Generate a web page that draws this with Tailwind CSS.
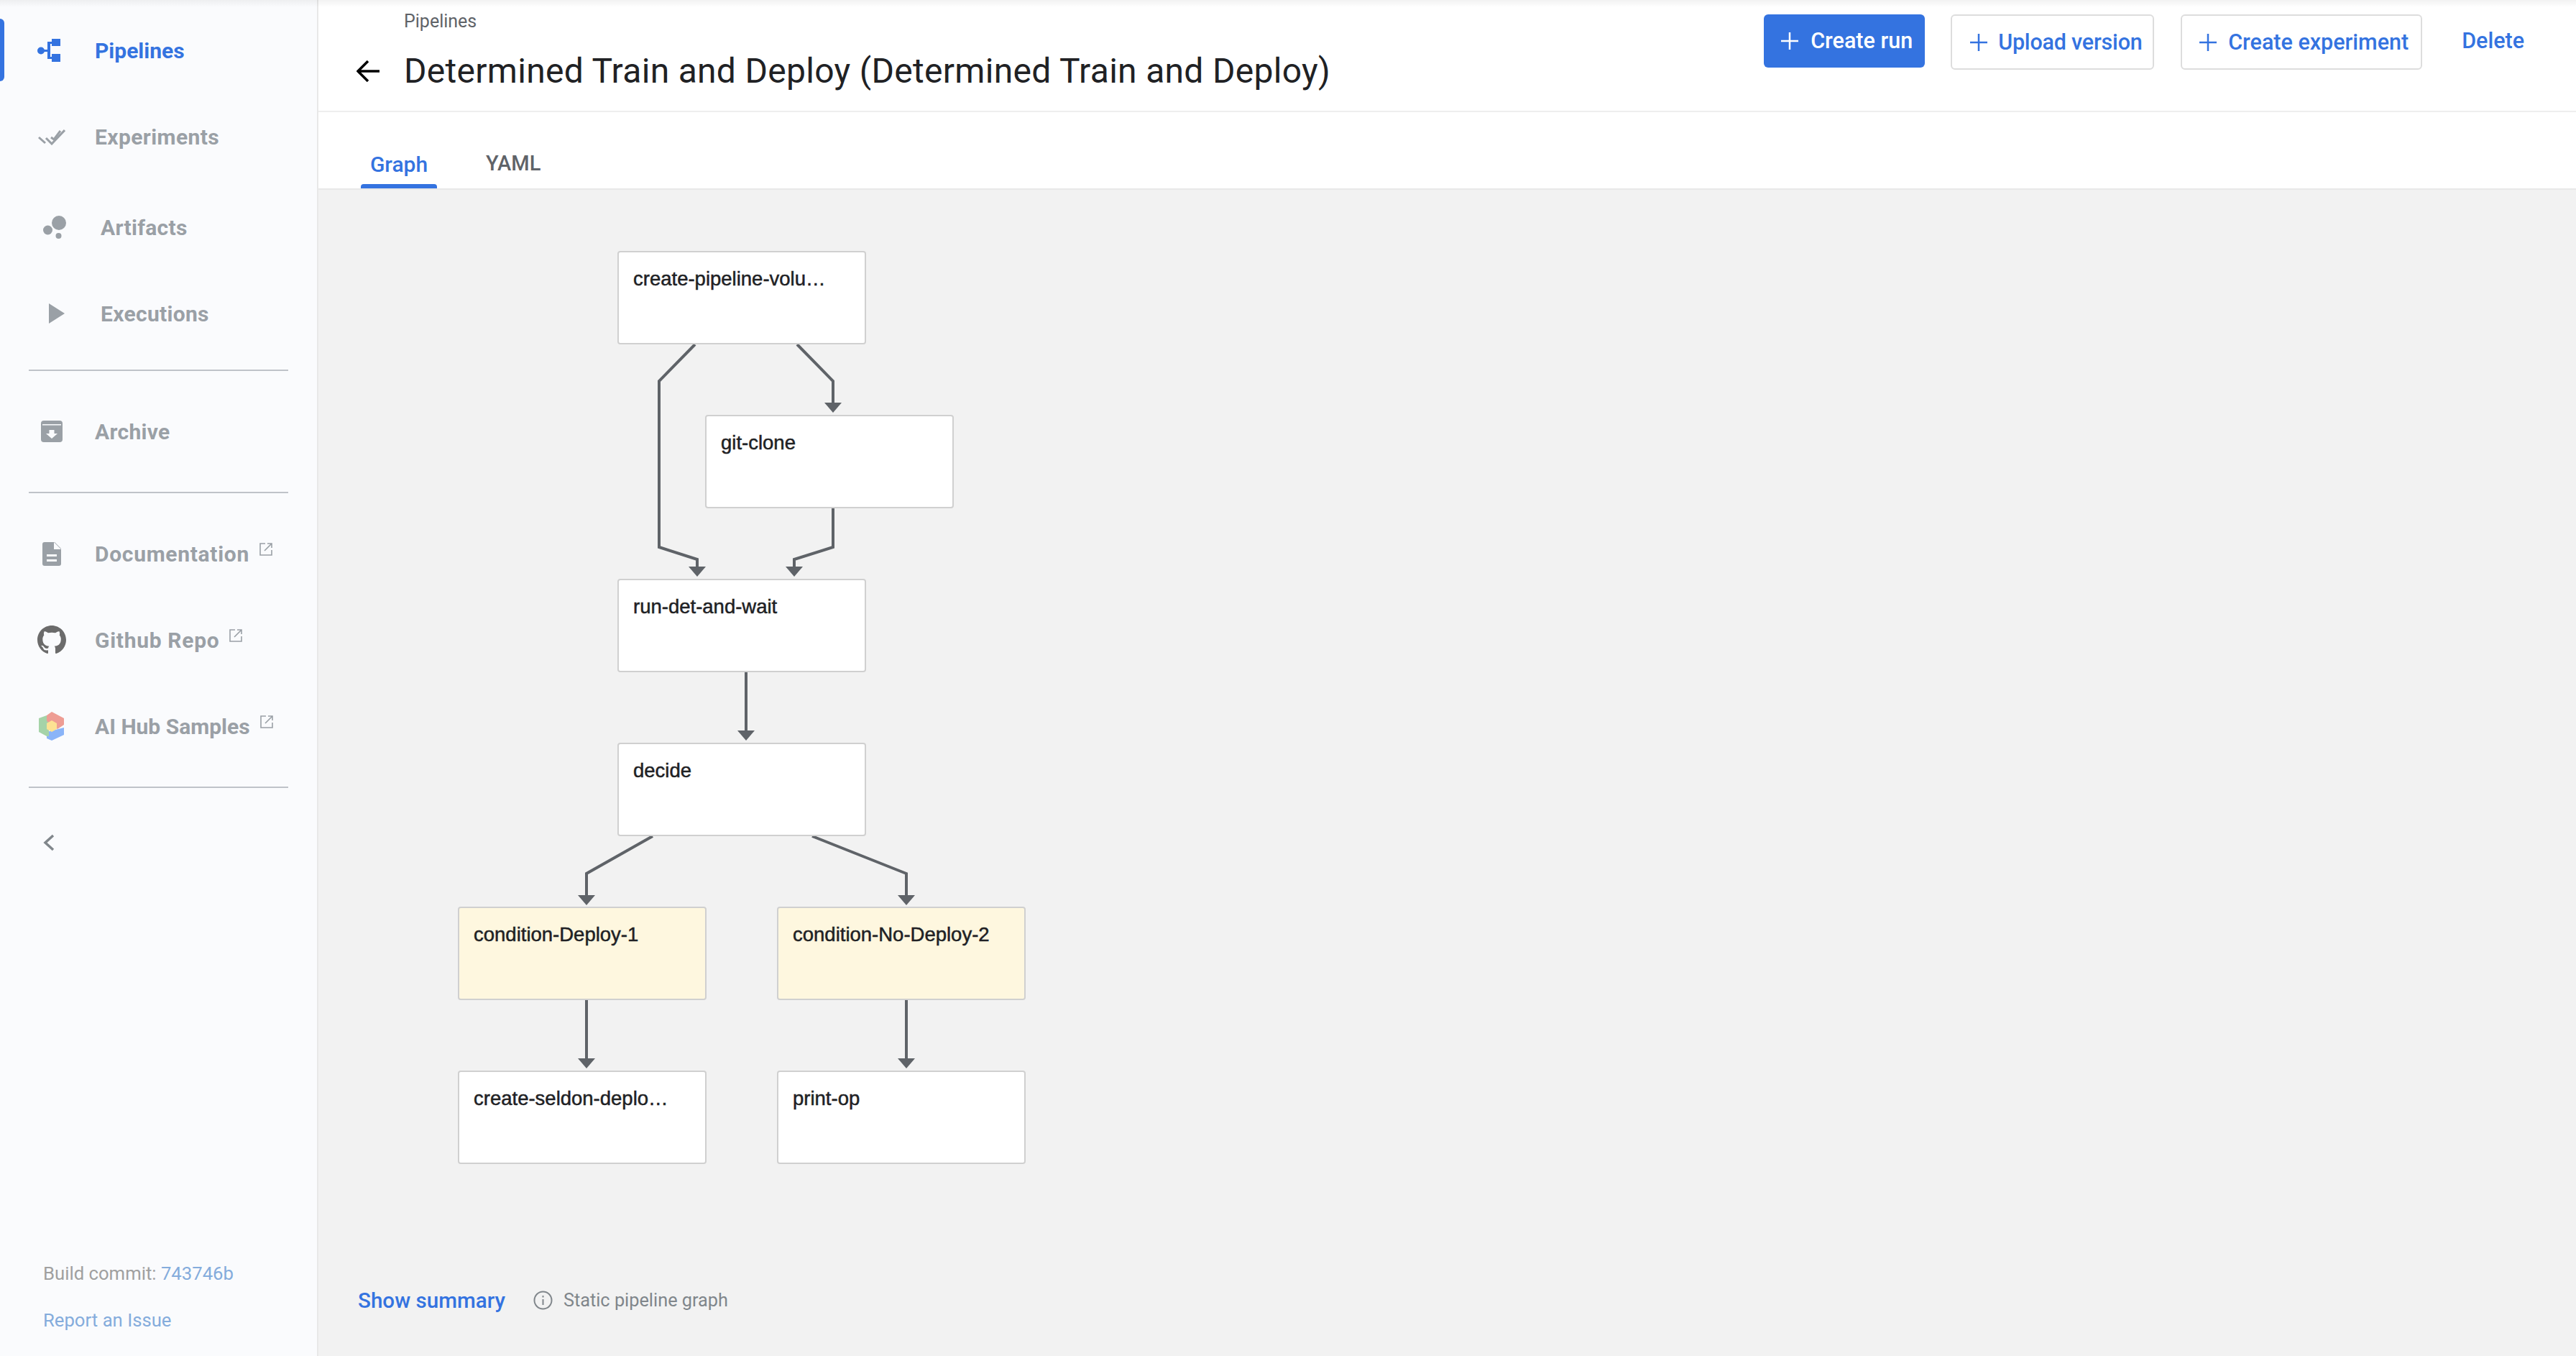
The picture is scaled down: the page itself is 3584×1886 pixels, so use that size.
<!DOCTYPE html>
<html>
<head>
<meta charset="utf-8">
<title>Determined Train and Deploy</title>
<script src="https://cdn.jsdelivr.net/npm/@tailwindcss/browser@4"></script>
</head>
<body class="font-['Roboto',sans-serif] bg-white">
<div class="relative flex h-[1886px] w-[3584px] overflow-hidden">

  <!-- top shadow -->
  <div class="absolute top-0 left-0 z-10 h-[10px] w-full bg-linear-to-b from-black/5 to-transparent"></div>

  <!-- sidebar -->
  <aside class="relative flex h-full w-[443px] shrink-0 flex-col justify-between border-r-2 border-[#e8e8e8] bg-[#fafbfd] text-[30px] font-bold text-[#9aa0a6]">
    <div class="absolute top-[26px] left-0 h-[87px] w-[6px] rounded-r-md bg-[#3473e0]"></div>
    <nav class="pt-[10px]">
      <div class="flex h-[120px] items-center text-[#3473e0]">
        <div class="w-[132px] shrink-0 pl-[52px]">
          <svg class="block" width="32" height="32" viewBox="0 0 32 32" fill="#3473e0">
            <circle cx="5" cy="16.5" r="5"/>
            <rect x="8" y="15" width="8" height="3"/>
            <rect x="14" y="4" width="4" height="24"/>
            <rect x="14" y="4" width="8" height="3"/>
            <rect x="14" y="25" width="8" height="3"/>
            <rect x="20" y="0" width="12" height="10"/>
            <rect x="20" y="21" width="12" height="11"/>
          </svg>
        </div>
        <span>Pipelines</span>
      </div>
      <div class="flex h-[120px] items-center">
        <div class="w-[132px] shrink-0 pl-[53px]">
          <svg class="block" width="38" height="23" viewBox="0 0 38 23" fill="none" stroke="#9aa0a6" stroke-width="3">
            <path d="M1 12l9 8"/>
            <path d="M11 13l8 8L37 2"/>
            <path d="M18 12l4 3L31 3"/>
          </svg>
        </div>
        <span class="tracking-[0.4px]">Experiments</span>
      </div>
      <div class="mt-[6px] flex h-[120px] items-center">
        <div class="w-[140px] shrink-0 pl-[60px]">
          <svg class="block" width="32" height="32" viewBox="0 0 32 32" fill="#9aa0a6">
            <ellipse cx="22" cy="10" rx="10" ry="10"/>
            <circle cx="6.5" cy="20" r="6.5"/>
            <circle cx="21.5" cy="28" r="4"/>
          </svg>
        </div>
        <span class="tracking-[0.3px]">Artifacts</span>
      </div>
      <div class="flex h-[120px] items-center">
        <div class="w-[140px] shrink-0 pl-[68px]">
          <svg class="block" width="22" height="28" viewBox="0 0 22 28" fill="#9aa0a6"><path d="M0 0l22 14L0 28z"/></svg>
        </div>
        <span class="tracking-[0.3px]">Executions</span>
      </div>
      <div class="mx-[40px] mt-[18px] h-[2px] bg-[#bfc3c9]"></div>
      <div class="mt-[24px] flex h-[120px] items-center">
        <div class="w-[132px] shrink-0 pl-[57px]">
          <svg class="block" width="30" height="30" viewBox="0 0 30 30">
            <rect width="30" height="30" rx="4" fill="#9aa0a6"/>
            <rect x="2" y="5" width="26" height="1.5" fill="#fafbfd"/>
            <path d="M11.5 13h7v5h4.5l-8 7-8-7h4.500z" fill="#fafbfd"/>
          </svg>
        </div>
        <span class="tracking-[0.3px]">Archive</span>
      </div>
      <div class="mx-[40px] mt-[24px] h-[2px] bg-[#bfc3c9]"></div>
      <div class="mt-[24px] flex h-[120px] items-center">
        <div class="w-[132px] shrink-0 pl-[59px]">
          <svg class="block" width="26" height="33" viewBox="0 0 26 33">
            <path d="M3 0h14l9 9v21a3 3 0 0 1-3 3H3a3 3 0 0 1-3-3V3a3 3 0 0 1 3-3z" fill="#9aa0a6"/>
            <path d="M16 0v10h10" fill="#fafbfd"/>
            <rect x="6" y="17" width="14" height="3" fill="#fafbfd"/>
            <rect x="6" y="24" width="14" height="3" fill="#fafbfd"/>
          </svg>
        </div>
        <span class="tracking-[0.7px]">Documentation</span>
        <svg class="mb-[12px] ml-[14px]" width="18" height="18" viewBox="0 0 18 18" fill="none" stroke="#9aa0a6" stroke-width="1.6"><path d="M8 1H1v16h16v-7M7 11L17 1M11 1h6v6"/></svg>
      </div>
      <div class="flex h-[120px] items-center">
        <div class="w-[132px] shrink-0 pl-[52px]">
          <svg class="block" width="40" height="40" viewBox="0 0 16 16" fill="#6b6b6b"><path d="M8 0C3.58 0 0 3.58 0 8c0 3.54 2.29 6.53 5.470 7.590.4.070.55-.17.55-.38 0-.19-.01-.82-.01-1.490-2.010.37-2.530-.49-2.690-.94-.09-.23-.48-.94-.82-1.130-.28-.15-.68-.52-.01-.53.63-.01 1.080.58 1.230.82.72 1.210 1.870.87 2.330.66.07-.52.28-.87.51-1.070-1.780-.2-3.640-.89-3.640-3.950 0-.87.31-1.590.82-2.150-.08-.2-.36-1.020.08-2.120 0 0 .67-.21 2.200.82.64-.18 1.320-.27 2-.27.68 0 1.360.09 2 .27 1.530-1.040 2.200-.82 2.200-.82.44 1.100.16 1.920.08 2.120.51.56.82 1.270.82 2.150 0 3.070-1.870 3.750-3.650 3.950.29.25.54.73.54 1.480 0 1.070-.01 1.930-.01 2.200 0 .21.15.46.55.38A8.013 8.013 0 0 0 16 8c0-4.420-3.580-8-8-8z"/></svg>
        </div>
        <span class="tracking-[0.7px]">Github Repo</span>
        <svg class="mb-[12px] ml-[14px]" width="18" height="18" viewBox="0 0 18 18" fill="none" stroke="#9aa0a6" stroke-width="1.6"><path d="M8 1H1v16h16v-7M7 11L17 1M11 1h6v6"/></svg>
      </div>
      <div class="flex h-[120px] items-center">
        <div class="w-[132px] shrink-0 pl-[54px]">
          <svg class="block" width="36" height="40" viewBox="0 0 36 40">
            <path d="M11 28l24-6v10l-17 8-7-3z" fill="#8ab4f8"/>
            <path d="M0 9l11-4 3 6v23l-3 0L0 28z" fill="#a5d3a8"/>
            <path d="M11 5l7-5 17 9v9l-9 6-15-11z" fill="#ee9d94"/>
            <path d="M11 16l7-4 7 4v8l-7 4-7-4z" fill="#fde293"/>
          </svg>
        </div>
        <span>AI Hub Samples</span>
        <svg class="mb-[12px] ml-[14px]" width="18" height="18" viewBox="0 0 18 18" fill="none" stroke="#9aa0a6" stroke-width="1.6"><path d="M8 1H1v16h16v-7M7 11L17 1M11 1h6v6"/></svg>
      </div>
      <div class="mx-[40px] mt-[24px] h-[2px] bg-[#bfc3c9]"></div>
      <div class="mt-[46px] flex h-[60px] items-center pl-[60px]">
        <svg width="16" height="24" viewBox="0 0 16 24" fill="none" stroke="#80868b" stroke-width="3.500"><path d="M14 2L3 12l11 10"/></svg>
      </div>
    </nav>
    <div class="pb-[35px] pl-[60px] text-[25.7px] font-normal">
      <div class="leading-[30px] text-[#a0a0a0]">Build commit: <span class="text-[#84acdc]">743746b</span></div>
      <div class="mt-[35px] leading-[30px] text-[#84acdc]">Report an Issue</div>
    </div>
  </aside>

  <!-- main -->
  <main class="flex h-full min-w-0 flex-1 flex-col">
    <header class="flex h-[156px] shrink-0 justify-between border-b-2 border-[#eeeeee] bg-white">
      <div class="pl-[53px]">
        <div class="pt-[15px] pl-[66px] text-[25px] leading-[30px] text-[#5f6368]">Pipelines</div>
        <div class="mt-[24px] flex items-center">
          <svg class="mr-[34px]" width="32" height="30" viewBox="0 0 32 30" fill="none" stroke="#000" stroke-width="3.500"><path d="M32 15H3M16 1L2 15l14 14"/></svg>
          <h1 class="text-[48px] leading-[60px] font-normal tracking-[0.3px] text-[#202124]">Determined Train and Deploy (Determined Train and Deploy)</h1>
        </div>
      </div>
      <div class="flex items-start pt-[20px] pr-[72px] text-[30.5px] font-medium text-[#3473e0]">
        <button class="flex h-[74px] w-[224px] items-center rounded-md bg-[#3473e0] pl-[24px] text-white">
          <svg class="mr-[17px]" width="24" height="24" viewBox="0 0 24 24" stroke="#fff" stroke-width="2.500"><path d="M12 0v24M0 12h24"/></svg>Create run
        </button>
        <button class="ml-[36px] flex h-[77px] w-[283px] items-center rounded-md border-2 border-[#dddddd] pl-[25px] tracking-[-0.2px]">
          <svg class="mr-[15px]" width="24" height="24" viewBox="0 0 24 24" stroke="#3473e0" stroke-width="2.500"><path d="M12 0v24M0 12h24"/></svg>Upload version
        </button>
        <button class="ml-[37px] flex h-[77px] w-[336px] items-center rounded-md border-2 border-[#dddddd] pl-[24px]">
          <svg class="mr-[16px]" width="24" height="24" viewBox="0 0 24 24" stroke="#3473e0" stroke-width="2.500"><path d="M12 0v24M0 12h24"/></svg>Create experiment
        </button>
        <button class="ml-[55px] h-[74px]">Delete</button>
      </div>
    </header>

    <div class="flex h-[108px] shrink-0 items-end gap-[68px] border-b-2 border-[#e8e8e8] bg-white pl-[59px] text-[30px] font-medium">
      <div class="relative flex h-[106px] w-[106px] items-center justify-center pt-[38px] text-[#3473e0]">Graph
        <div class="absolute bottom-0 left-0 h-[6px] w-full rounded-t-sm bg-[#3473e0]"></div>
      </div>
      <div class="flex h-[106px] items-center pt-[38px] text-[29px] text-[#5f6368]">YAML</div>
    </div>

    <section class="relative min-h-0 flex-1 bg-[#f2f2f2]">
      <!-- section origin is (443,264) -->
      <svg class="absolute top-0 left-0" width="1100" height="1400" viewBox="443 264 1100 1400" fill="none">
        <g stroke="#5f6368" stroke-width="4">
          <path d="M967 479L917 530V761L970 778V790"/>
          <path d="M1109 479L1159 530V562"/>
          <path d="M1159 707V761L1105 778V790"/>
          <path d="M1038 935V1018"/>
          <path d="M908 1163L816 1215V1247"/>
          <path d="M1130 1163L1261 1215V1247"/>
          <path d="M816 1391V1474"/>
          <path d="M1261 1391V1474"/>
        </g>
        <g fill="#5f6368">
          <path d="M958 788h24l-12 14z"/>
          <path d="M1093 788h24l-12 14z"/>
          <path d="M1147 560h24l-12 14z"/>
          <path d="M1026 1016h24l-12 14z"/>
          <path d="M804 1245h24l-12 14z"/>
          <path d="M1249 1245h24l-12 14z"/>
          <path d="M804 1472h24l-12 14z"/>
          <path d="M1249 1472h24l-12 14z"/>
        </g>
      </svg>

      <div class="absolute top-[85px] left-[416px] h-[130px] w-[346px] rounded-[4px] border-2 border-[#d0d0d0] bg-white pt-[21px] pl-[20px] font-['Liberation_Sans',sans-serif] text-[27.5px] leading-[32px] text-[#202124] [-webkit-text-stroke:0.5px_#202124]">create-pipeline-volu…</div>
      <div class="absolute top-[313px] left-[538px] h-[130px] w-[346px] rounded-[4px] border-2 border-[#d0d0d0] bg-white pt-[21px] pl-[20px] font-['Liberation_Sans',sans-serif] text-[27.5px] leading-[32px] text-[#202124] [-webkit-text-stroke:0.5px_#202124]">git-clone</div>
      <div class="absolute top-[541px] left-[416px] h-[130px] w-[346px] rounded-[4px] border-2 border-[#d0d0d0] bg-white pt-[21px] pl-[20px] font-['Liberation_Sans',sans-serif] text-[27.5px] leading-[32px] text-[#202124] [-webkit-text-stroke:0.5px_#202124]">run-det-and-wait</div>
      <div class="absolute top-[769px] left-[416px] h-[130px] w-[346px] rounded-[4px] border-2 border-[#d0d0d0] bg-white pt-[21px] pl-[20px] font-['Liberation_Sans',sans-serif] text-[27.5px] leading-[32px] text-[#202124] [-webkit-text-stroke:0.5px_#202124]">decide</div>
      <div class="absolute top-[997px] left-[194px] h-[130px] w-[346px] rounded-[4px] border-2 border-[#d0d0d0] bg-[#fef7df] pt-[21px] pl-[20px] font-['Liberation_Sans',sans-serif] text-[27.5px] leading-[32px] text-[#202124] [-webkit-text-stroke:0.5px_#202124]">condition-Deploy-1</div>
      <div class="absolute top-[997px] left-[638px] h-[130px] w-[346px] rounded-[4px] border-2 border-[#d0d0d0] bg-[#fef7df] pt-[21px] pl-[20px] font-['Liberation_Sans',sans-serif] text-[27.5px] leading-[32px] text-[#202124] [-webkit-text-stroke:0.5px_#202124]">condition-No-Deploy-2</div>
      <div class="absolute top-[1225px] left-[194px] h-[130px] w-[346px] rounded-[4px] border-2 border-[#d0d0d0] bg-white pt-[21px] pl-[20px] font-['Liberation_Sans',sans-serif] text-[27.5px] leading-[32px] text-[#202124] [-webkit-text-stroke:0.5px_#202124]">create-seldon-deplo…</div>
      <div class="absolute top-[1225px] left-[638px] h-[130px] w-[346px] rounded-[4px] border-2 border-[#d0d0d0] bg-white pt-[21px] pl-[20px] font-['Liberation_Sans',sans-serif] text-[27.5px] leading-[32px] text-[#202124] [-webkit-text-stroke:0.5px_#202124]">print-op</div>

      <!-- footer of the graph -->
      <div class="absolute bottom-[55px] left-[55px] flex items-center">
        <span class="text-[29.6px] font-medium text-[#3473e0]">Show summary</span>
        <svg class="mr-[15px] ml-[39px]" width="27" height="27" viewBox="0 0 27 27" fill="none" stroke="#80868b" stroke-width="2"><circle cx="13.500" cy="13.500" r="12"/><path d="M13.500 12v8M13.500 7v2.500"/></svg>
        <span class="text-[25.3px] text-[#80868b]">Static pipeline graph</span>
      </div>
    </section>
  </main>
</div>
</body>
</html>
